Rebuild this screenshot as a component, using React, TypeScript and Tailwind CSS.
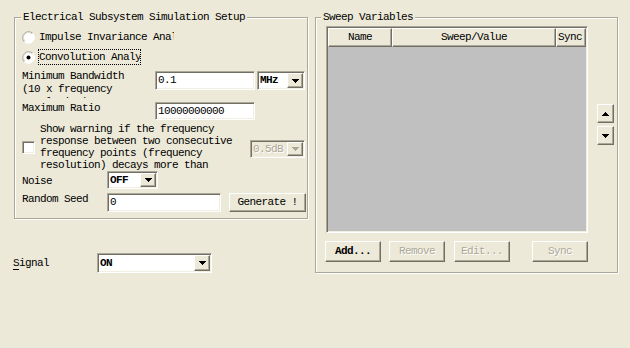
import React from "react";

const SUNKEN =
  "box-border border border-t-[#aca899] border-l-[#aca899] border-r-white border-b-white shadow-[inset_1px_1px_0_#716f64,inset_-1px_-1px_0_#f1efe2]";
const RAISED =
  "box-border border border-t-white border-l-white border-r-[#716f64] border-b-[#716f64] shadow-[inset_-1px_-1px_0_#aca899]";

function TriDown({ color = "#000" }: { color?: string }) {
  return (
    <svg width="7" height="4" viewBox="0 0 7 4" fill={color} shapeRendering="crispEdges">
      <rect x="0" y="0" width="7" height="1" />
      <rect x="1" y="1" width="5" height="1" />
      <rect x="2" y="2" width="3" height="1" />
      <rect x="3" y="3" width="1" height="1" />
    </svg>
  );
}

function TriUp({ color = "#000" }: { color?: string }) {
  return (
    <svg width="7" height="4" viewBox="0 0 7 4" fill={color} shapeRendering="crispEdges">
      <rect x="3" y="0" width="1" height="1" />
      <rect x="2" y="1" width="3" height="1" />
      <rect x="1" y="2" width="5" height="1" />
      <rect x="0" y="3" width="7" height="1" />
    </svg>
  );
}

function Radio({ checked }: { checked?: boolean }) {
  return (
    <svg width="13" height="13" viewBox="0 0 13 13" className="shrink-0">
      <circle cx="6.5" cy="6.5" r="6" fill="#fff" />
      <path d="M2.26 10.74 A6 6 0 0 1 10.74 2.26" stroke="#aca899" fill="none" />
      <path d="M2.96 10.04 A5 5 0 0 1 10.04 2.96" stroke="#d8d5c8" fill="none" />
      <path d="M10.74 2.26 A6 6 0 0 1 2.26 10.74" stroke="#ffffff" fill="none" />
      {checked && <circle cx="6.5" cy="6.5" r="2" fill="#000" />}
    </svg>
  );
}

function Combo({
  value,
  className,
  disabled,
}: {
  value: string;
  className: string;
  disabled?: boolean;
}) {
  return (
    <div
      className={`flex p-[1px] ${SUNKEN} ${disabled ? "bg-[#ece9d8]" : "bg-white"} ${className}`}
    >
      <div
        className={`flex-1 flex items-center pl-[1px] overflow-hidden whitespace-nowrap ${
          disabled ? "text-[#aca899] [text-shadow:1px_1px_0_#fff]" : "text-black font-bold"
        }`}
      >
        {value}
      </div>
      <div className={`w-[16px] h-full flex items-center justify-center bg-[#ece9d8] ${RAISED}`}>
        <TriDown color={disabled ? "#aca899" : "#000"} />
      </div>
    </div>
  );
}

function Field({ value, className }: { value: string; className: string }) {
  return (
    <div className={`flex items-center bg-white pl-[2px] overflow-hidden whitespace-nowrap ${SUNKEN} ${className}`}>
      {value}
    </div>
  );
}

function Button({
  label,
  className,
  disabled,
  bold,
}: {
  label: string;
  className: string;
  disabled?: boolean;
  bold?: boolean;
}) {
  return (
    <div
      className={`flex items-center justify-center bg-[#ece9d8] whitespace-nowrap ${RAISED} ${
        disabled ? "text-[#aca899] [text-shadow:1px_1px_0_#fff]" : "text-black"
      } ${bold ? "font-bold" : ""} ${className}`}
    >
      {label}
    </div>
  );
}

function Group({
  title,
  titleLeft,
  className,
  children,
}: {
  title: string;
  titleLeft: string;
  className: string;
  children: React.ReactNode;
}) {
  return (
    <div
      className={`relative box-border border border-[#aca899] shadow-[inset_1px_1px_0_#fff,1px_1px_0_#fff] ${className}`}
    >
      <div className={`absolute -top-[8px] ${titleLeft} px-[2px] bg-[#ece9d8] leading-[14px] whitespace-nowrap`}>
        {title}
      </div>
      {children}
    </div>
  );
}

export default function App() {
  return (
    <div className="w-[630px] h-[348px] bg-[#ece9d8] text-black font-['Liberation_Mono',monospace] text-[11px] tracking-[-0.6px] leading-[13px] overflow-hidden">
      <div className="flex pt-[17px] pl-[14px] gap-[7px]">
        {/* Left column */}
        <div className="flex flex-col w-[294px]">
          <Group
            title="Electrical Subsystem Simulation Setup"
            titleLeft="left-[6px]"
            className="w-[294px] h-[202px]"
          >
            <div className="flex flex-col pl-[7px]">
              {/* radio 1 */}
              <div className="flex items-center h-[14px] mt-[12px]">
                <Radio />
                <div className="ml-[4px] w-[135px] overflow-hidden whitespace-nowrap">
                  Impulse Invariance Analysis
                </div>
              </div>
              {/* radio 2 */}
              <div className="flex items-center h-[16px] mt-[5px]">
                <Radio checked />
                <div className="ml-[3px] w-[103px] h-[16px] flex items-center border border-dotted border-black overflow-hidden whitespace-nowrap">
                  Convolution Analysis
                </div>
              </div>
              {/* bandwidth */}
              <div className="flex h-[28px] mt-[5px]">
                <div className="w-[133px] h-[28px] overflow-hidden">
                  Minimum Bandwidth
                  <br />
                  (10 x frequency
                  <br />
                  resolution)
                </div>
                <Field value="0.1" className="w-[100px] h-[19px] mt-[1px]" />
                <Combo value="MHz" className="w-[48px] h-[19px] mt-[1px] ml-[2px]" />
              </div>
              {/* max ratio */}
              <div className="flex h-[19px] mt-[3px]">
                <div className="w-[133px] pt-[1px]">Maximum Ratio</div>
                <Field value="10000000000" className="w-[100px] h-[18px] mt-[1px]" />
              </div>
              {/* warning */}
              <div className="flex h-[48px] mt-[2px]">
                <div className={`w-[13px] h-[13px] mt-[19px] bg-white ${SUNKEN}`} />
                <div className="ml-[5px] w-[210px] pt-[1px] leading-[12px] whitespace-nowrap">
                  <div>Show warning if the frequency</div>
                  <div>response between two consecutive</div>
                  <div>frequency points (frequency</div>
                  <div>resolution) decays more than</div>
                </div>
                <Combo value="0.5dB" disabled className="w-[55px] h-[18px] mt-[18px]" />
              </div>
              {/* noise */}
              <div className="flex items-center h-[18px] mt-[1px]">
                <div className="w-[85px] pt-[2px]">Noise</div>
                <Combo value="OFF" className="w-[51px] h-[18px]" />
              </div>
              {/* random seed */}
              <div className="flex h-[19px] mt-[4px]">
                <div className="w-[85px]">Random Seed</div>
                <Field value="0" className="w-[114px] h-[19px]" />
                <Button label="Generate !" className="w-[77px] h-[19px] ml-[8px]" />
              </div>
            </div>
          </Group>
          {/* Signal */}
          <div className="flex items-center h-[20px] mt-[34px] -ml-px">
            <div className="w-[84px] pt-[1px]">
              <span className="underline underline-offset-[3px]">S</span>ignal
            </div>
            <Combo value="ON" className="w-[115px] h-[20px]" />
          </div>
        </div>

        {/* Right group */}
        <Group title="Sweep Variables" titleLeft="left-[5px]" className="w-[303px] h-[256px]">
          <div className="flex flex-col pt-[8px] pl-[10px]">
            <div className="flex">
              <div className={`w-[262px] h-[207px] bg-[#c0c0c0] ${SUNKEN} p-[1px]`}>
                <div className="flex h-[19px]">
                  <div className={`w-[64px] flex items-center justify-center bg-[#ece9d8] ${RAISED}`}>Name</div>
                  <div className={`w-[164px] flex items-center justify-center bg-[#ece9d8] ${RAISED}`}>
                    Sweep/Value
                  </div>
                  <div className={`w-[30px] flex items-center pl-[1px] bg-[#ece9d8] ${RAISED}`}>Sync</div>
                </div>
              </div>
              <div className="flex flex-col ml-[9px] mt-[78px] gap-[3px]">
                <div className={`w-[17px] h-[19px] flex items-center justify-center bg-[#ece9d8] ${RAISED}`}>
                  <TriUp />
                </div>
                <div className={`w-[17px] h-[19px] flex items-center justify-center bg-[#ece9d8] ${RAISED}`}>
                  <TriDown />
                </div>
              </div>
            </div>
            <div className="flex mt-[8px] -ml-px">
              <Button label="Add..." bold className="w-[56px] h-[21px]" />
              <Button label="Remove" disabled className="w-[56px] h-[21px] ml-[8px]" />
              <Button label="Edit..." disabled className="w-[56px] h-[21px] ml-[9px]" />
              <Button label="Sync" disabled className="w-[56px] h-[21px] ml-[22px]" />
            </div>
          </div>
        </Group>
      </div>
    </div>
  );
}
